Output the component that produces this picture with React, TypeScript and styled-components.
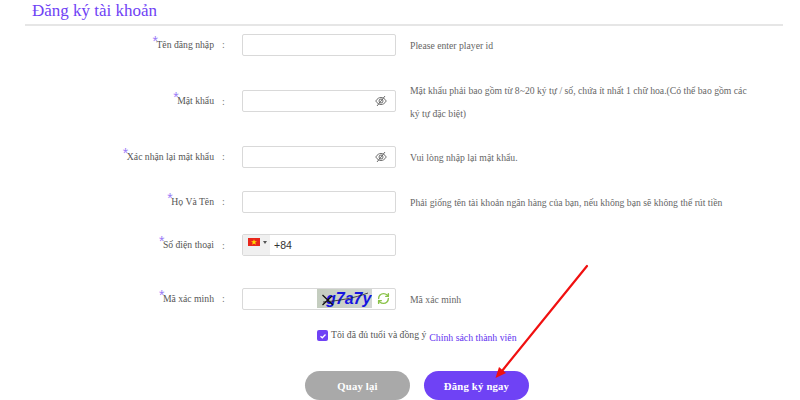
import styled, { createGlobalStyle } from "styled-components";
import { RefreshCw } from "lucide-react";

const Global = createGlobalStyle`
  html, body {
    margin: 0;
    padding: 0;
    background: #fff;
    overflow: hidden;
  }
  body {
    font-family: "Liberation Serif", "Times New Roman", serif;
  }
`;

const Page = styled.div`
  position: relative;
  width: 800px;
  height: 400px;
  overflow: hidden;
`;

const Header = styled.div`
  margin-left: 25px;
  width: 758px;
  height: 26px;
  padding: 1px 0 0 7px;
  box-sizing: border-box;
  border-bottom: 2px solid #e6e6e6;
`;

const Title = styled.h1`
  margin: 0;
  font-size: 17px;
  line-height: 20px;
  font-weight: 400;
  color: #6f42f5;
`;

const Form = styled.div`
  display: flex;
  flex-direction: column;
  padding-top: 7px;
`;

const Row = styled.div<{ $top?: number }>`
  display: flex;
  align-items: center;
  margin-top: ${(p) => p.$top ?? 0}px;
`;

const LabelCell = styled.div`
  width: 214px;
  display: flex;
  justify-content: flex-end;
  flex-shrink: 0;
`;

const Label = styled.label`
  position: relative;
  font-size: 9.7px;
  line-height: 14px;
  color: #555;
  &::before {
    content: "*";
    position: absolute;
    left: -4px;
    top: -4px;
    font-family: "Liberation Sans", sans-serif;
    font-size: 14px;
    line-height: 14px;
    color: #9a7bf7;
  }
`;

const Colon = styled.span`
  width: 28px;
  padding-left: 8px;
  box-sizing: border-box;
  font-size: 10px;
  color: #777;
  flex-shrink: 0;
`;

const Field = styled.div`
  width: 154px;
  height: 22px;
  flex-shrink: 0;
  display: flex;
  align-items: center;
  box-sizing: border-box;
  border: 1px solid #d9d9d9;
  border-radius: 2px;
  background: #fff;
  overflow: hidden;
`;

const Input = styled.input`
  flex: 1;
  min-width: 0;
  height: 100%;
  border: 0;
  padding: 0 4px;
  outline: none;
  background: transparent;
  font-family: "Liberation Sans", sans-serif;
  font-size: 10.5px;
  color: #333;
`;

const EyeButton = styled.span`
  display: flex;
  margin-right: 8px;
  color: #555;
`;

const Hint = styled.div<{ $wrap?: boolean }>`
  margin: 1px 0 -1px 14px;
  width: 342px;
  font-size: 9.7px;
  line-height: 23px;
  color: #666;
  white-space: ${(p) => (p.$wrap ? "normal" : "nowrap")};
`;

const FlagBox = styled.div`
  width: 27px;
  height: 100%;
  background: #f0f0f0;
  display: flex;
  align-items: flex-start;
  gap: 3px;
  padding: 3px 0 0 5px;
  box-sizing: border-box;
  flex-shrink: 0;
`;

const Caret = styled.span`
  width: 0;
  height: 0;
  margin-top: 3px;
  border-left: 2px solid transparent;
  border-right: 2px solid transparent;
  border-top: 3px solid #555;
`;

const Captcha = styled.div`
  width: 55px;
  height: 19px;
  flex-shrink: 0;
  position: relative;
  display: flex;
  align-items: center;
  padding-left: 9px;
  box-sizing: border-box;
  background: linear-gradient(90deg, #c4cdbf, #d2d6d2);
  font-family: "Liberation Sans", sans-serif;
  font-style: italic;
  font-weight: 700;
  font-size: 16px;
  color: #1515e0;
  overflow: hidden;
`;

const CaptchaLines = styled.svg`
  position: absolute;
  inset: 0;
`;

const Refresh = styled.span`
  width: 23px;
  display: flex;
  justify-content: center;
  color: #8bc34a;
`;

const AgreeRow = styled.div`
  display: flex;
  margin-top: 18px;
  padding-left: 317px;
  height: 16px;
`;

const Check = styled.span`
  width: 11px;
  height: 11px;
  margin-top: 2px;
  border-radius: 2px;
  background: #6f42f5;
  display: flex;
  align-items: center;
  justify-content: center;
  flex-shrink: 0;
`;

const AgreeText = styled.span`
  margin-left: 3px;
  font-size: 9.7px;
  line-height: 14px;
  color: #555;
  white-space: nowrap;
`;

const PolicyLink = styled.a`
  margin-left: 3px;
  margin-top: 3px;
  font-size: 9.8px;
  line-height: 14px;
  color: #6233f0;
  white-space: nowrap;
`;

const Buttons = styled.div`
  display: flex;
  gap: 14px;
  margin-top: 27px;
  padding-left: 305px;
`;

const Button = styled.button<{ $primary?: boolean }>`
  width: 105px;
  height: 29px;
  border: 0;
  padding: 0;
  border-radius: 15px;
  background: ${(p) => (p.$primary ? "#6f42f5" : "#a9a9a9")};
  color: #fff;
  font-family: "Liberation Serif", serif;
  font-weight: 700;
  font-size: 10.7px;
  letter-spacing: 0.2px;
`;

const Arrow = styled.svg`
  position: absolute;
  left: 0;
  top: 0;
  pointer-events: none;
`;

const Eye = () => (
  <svg width="12" height="12" viewBox="0 0 24 24" fill="none" stroke="currentColor" strokeWidth="1.7">
    <path d="M1.5 12C5 6.5 8.5 5 12 5s7 1.500 10.500 7C19 17.500 15.500 19 12 19s-7-1.500-10.500-7z" />
    <circle cx="12" cy="12" r="4" />
    <path d="M20 2 4 22" />
  </svg>
);

const Flag = () => (
  <svg width="12" height="8" viewBox="0 0 12 8">
    <rect width="12" height="8" fill="#e8261c" />
    <polygon points="6,1.200 6.800,3.300 9,3.300 7.200,4.600 7.900,6.800 6,5.500 4.100,6.800 4.800,4.600 3,3.300 5.200,3.300" fill="#ffe000" />
  </svg>
);

export default function App() {
  return (
    <Page>
      <Global />
      <Header>
        <Title>Đăng ký tài khoản</Title>
      </Header>
      <Form>
        <Row>
          <LabelCell><Label>Tên đăng nhập</Label></LabelCell>
          <Colon>:</Colon>
          <Field><Input /></Field>
          <Hint>Please enter player id</Hint>
        </Row>
        <Row $top={22}>
          <LabelCell><Label>Mật khẩu</Label></LabelCell>
          <Colon>:</Colon>
          <Field>
            <Input type="password" />
            <EyeButton><Eye /></EyeButton>
          </Field>
          <Hint $wrap>Mật khẩu phải bao gồm từ 8~20 ký tự / số, chứa ít nhất 1 chữ hoa.(Có thể bao gồm các ký tự đặc biệt)</Hint>
        </Row>
        <Row $top={21}>
          <LabelCell><Label>Xác nhận lại mật khẩu</Label></LabelCell>
          <Colon>:</Colon>
          <Field>
            <Input type="password" />
            <EyeButton><Eye /></EyeButton>
          </Field>
          <Hint>Vui lòng nhập lại mật khẩu.</Hint>
        </Row>
        <Row $top={22}>
          <LabelCell><Label>Họ Và Tên</Label></LabelCell>
          <Colon>:</Colon>
          <Field><Input /></Field>
          <Hint>Phải giống tên tài khoản ngân hàng của bạn, nếu không bạn sẽ không thể rút tiền</Hint>
        </Row>
        <Row $top={21}>
          <LabelCell><Label>Số điện thoại</Label></LabelCell>
          <Colon>:</Colon>
          <Field>
            <FlagBox><Flag /><Caret /></FlagBox>
            <Input defaultValue="+84" />
          </Field>
        </Row>
        <Row $top={31}>
          <LabelCell><Label>Mã xác minh</Label></LabelCell>
          <Colon>:</Colon>
          <Field>
            <Input />
            <Captcha>
              g7a7y
              <CaptchaLines width="55" height="19" viewBox="0 0 55 19">
                <path d="M5.500 6 16 16M5.500 16 15 7" stroke="#111" strokeWidth="1.300" />
                <path d="M6 13C20 12 38 9 51 4" stroke="#222" strokeWidth="0.800" fill="none" />
              </CaptchaLines>
            </Captcha>
            <Refresh><RefreshCw size={13} strokeWidth={2.6} /></Refresh>
          </Field>
          <Hint>Mã xác minh</Hint>
        </Row>
        <AgreeRow>
          <Check>
            <svg width="8" height="8" viewBox="0 0 8 8" fill="none" stroke="#fff" strokeWidth="1.300">
              <path d="M1.500 4.200 3.300 5.800 6.500 2.500" />
            </svg>
          </Check>
          <AgreeText>Tôi đã đủ tuổi và đồng ý</AgreeText>
          <PolicyLink>Chính sách thành viên</PolicyLink>
        </AgreeRow>
        <Buttons>
          <Button>Quay lại</Button>
          <Button $primary>Đăng ký ngay</Button>
        </Buttons>
      </Form>
      <Arrow width="800" height="400" viewBox="0 0 800 400">
        <path d="M587 266 502 371" stroke="#f01010" strokeWidth="2.200" strokeLinecap="round" />
        <polygon points="495.500,378 499,367 506,373" fill="#f01010" />
      </Arrow>
    </Page>
  );
}
